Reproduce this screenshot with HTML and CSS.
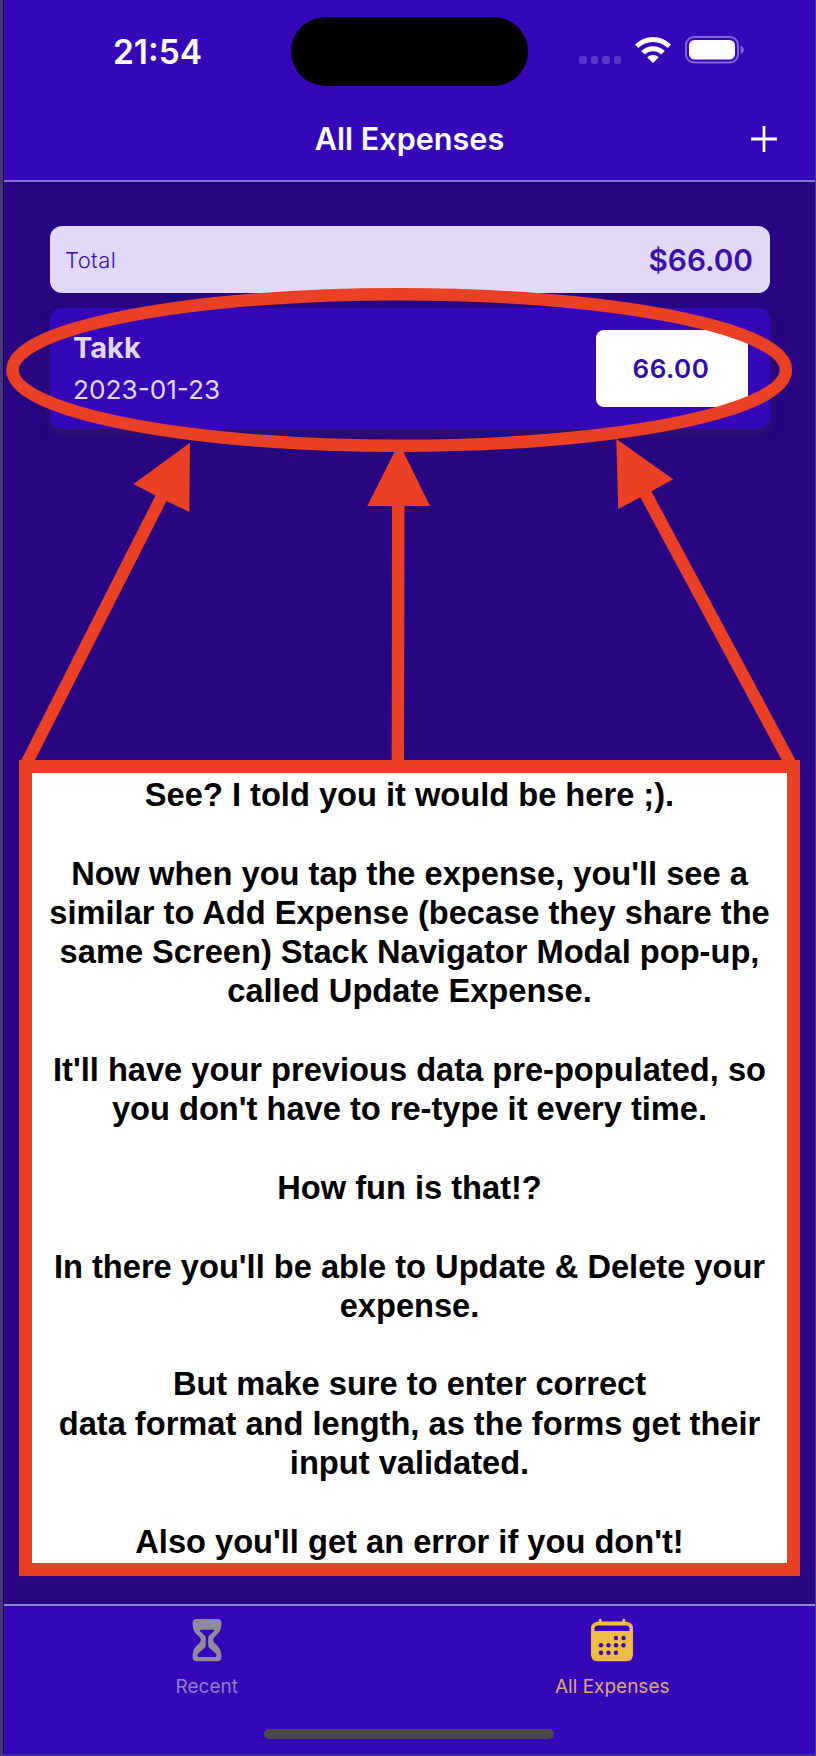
FILE: index.html
```html
<!DOCTYPE html>
<html lang="en">
<head>
<meta charset="utf-8">
<title>All Expenses</title>
<link rel="stylesheet" href="styles.css">
</head>
<body>
<div class="phone">
  <header class="header">
    <div class="status">
      <div class="status-side"><span class="clock">21:54</span></div>
      <div class="island"></div>
      <div class="status-side status-icons">
        <div class="signal"><i></i><i></i><i></i><i></i></div>
        <svg class="wifi" width="36" height="27" viewBox="0 0 36 27">
          <path d="M0 8.5A25.5 25.5 0 0 1 36 8.5L32.7 12A20.8 20.8 0 0 0 3.300 12Z" fill="#fff"/>
          <path d="M6.200 15A16.800 16.800 0 0 1 29.800 15L26.300 18.600A11.900 11.900 0 0 0 9.700 18.600Z" fill="#fff"/>
          <path d="M12.200 21.200A8.400 8.400 0 0 1 23.800 21.200L18 27Z" fill="#fff"/>
        </svg>
        <svg class="battery" width="60" height="28" viewBox="0 0 60 28">
          <rect x="1" y="1" width="52" height="25.500" rx="8" fill="none" stroke="#8463d8" stroke-width="2"/>
          <rect x="4" y="4" width="46" height="19.500" rx="5.500" fill="#fff"/>
          <path d="M55.500 9.500c4.500 1.500 4.500 7 0 8.500z" fill="#8463d8"/>
        </svg>
      </div>
    </div>
    <div class="navbar">
      <h1 class="title">All Expenses</h1>
      <svg class="add" width="28" height="28" viewBox="0 0 28 28"><path d="M14 1v26M1 14h26" stroke="#fff" stroke-width="2.800"/></svg>
    </div>
  </header>
  <main class="content">
    <section class="total"><span class="total-label">Total</span><span class="total-sum">$66.00</span></section>
    <section class="expense">
      <div>
        <div class="name">Takk</div>
        <div class="date">2023-01-23</div>
      </div>
      <div class="amount">66.00</div>
    </section>
    <aside class="note">
      <p>See? I told you it would be here ;).</p>
      <p>Now when you tap the expense, you'll see a<br>similar to Add Expense (becase they share the<br>same Screen) Stack Navigator Modal pop-up,<br>called Update Expense.</p>
      <p>It'll have your previous data pre-populated, so<br>you don't have to re-type it every time.</p>
      <p>How fun is that!?</p>
      <p>In there you'll be able to Update &amp; Delete your<br>expense.</p>
      <p>But make sure to enter correct<br>data format and length, as the forms get their<br>input validated.</p>
      <p>Also you'll get an error if you don't!</p>
    </aside>
  </main>
  <nav class="tabs">
    <div class="tab">
      <svg width="44" height="44" viewBox="0 0 44 44">
        <path fill="#8f8c99" fill-rule="evenodd" d="M12 1H32Q36.800 1 36.400 5.500C36 13 34.500 14.500 29.500 19Q26.800 21.800 29.500 25C34.500 29.500 36 31.500 36.400 38.500Q36.800 43.200 32 43.200H12Q7.200 43.200 7.600 38.500C8 31.500 9.500 29.500 14.500 25Q17.200 21.800 14.500 19C9.500 14.500 8 13 7.600 5.500Q7.200 1 12 1ZM15.500 11.800Q14.200 12 15 13.200L20 17.800Q20.800 18.800 20.800 20V27Q20.800 29 19.500 30L13.500 35.200Q12 36.800 12.500 38.200Q13 39 14 39H30Q31 39 31.500 38.200Q32 36.800 30.500 35.200L24.500 30Q23.200 29 23.200 27V20Q23.200 18.800 24 17.800L29 13.200Q29.800 12 28.500 11.800Z"/>
      </svg>
      <span class="tab-label">Recent</span>
    </div>
    <div class="tab tab-active">
      <svg width="44" height="44" viewBox="0 0 44 44">
        <path fill="#efbd45" fill-rule="evenodd" d="M8.700 3.500V2.200a1.500 1.500 0 0 1 3 0V3.500H32.300V2.200a1.500 1.500 0 0 1 3 0V3.500Q43 4 43 10.500V36.500Q43 43.300 36 43.300H8Q1 43.300 1 36.500V10.500Q1 4 8.700 3.500ZM8 7.500Q4.500 7.500 4.500 10.500V13H39.500V10.500Q39.500 7.500 36 7.500Z"/>
        <g fill="#3a0ca9"><circle cx="26" cy="20" r="2.200"/><circle cx="33.500" cy="20" r="2.200"/><circle cx="11" cy="27.300" r="2.200"/><circle cx="18.500" cy="27.300" r="2.200"/><circle cx="26" cy="27.300" r="2.200"/><circle cx="33.500" cy="27.300" r="2.200"/><circle cx="11" cy="34.700" r="2.200"/><circle cx="18.500" cy="34.700" r="2.200"/><circle cx="26" cy="34.700" r="2.200"/></g>
      </svg>
      <span class="tab-label">All Expenses</span>
    </div>
    <div class="home-bar"></div>
  </nav>
  <svg class="callout" width="816" height="1756" viewBox="0 0 816 1756">
    <ellipse cx="399.200" cy="370" rx="386.700" ry="75.800" fill="none" stroke="#ea4025" stroke-width="12.400"/>
    <g fill="#ea4025">
      <path d="M190 442.700L189.300 512L166.500 501L34.500 761H20.800L155.500 495.500L133.500 484Z"/>
      <path d="M399 443L430 506H404.500L404 761H391.700L392 506H367.300Z"/>
      <path d="M616.300 439L673.200 479.300L651.300 491.300L796 761H782.300L640.300 497.300L618.200 509Z"/>
    </g>
  </svg>
</div>
</body>
</html>
```
FILE: styles.css
```css
* { box-sizing: border-box; }
body { margin: 0; background: #290681; font-family: Inter, "Liberation Sans", sans-serif; }
.phone {
  position: relative;
  display: flex;
  flex-direction: column;
  width: 816px;
  height: 1756px;
  overflow: hidden;
  background: #290681;
  border-left: 3px solid #49337f;
  border-right: 1px solid #4c389a;
  border-bottom: 2px solid #432b94;
  box-shadow: inset 1px 0 #12033d;
}
.header {
  display: flex;
  flex-direction: column;
  height: 182px;
  margin-left: 1px;
  background: #3606b9;
  border-bottom: 2px solid #8174cf;
}
.status { display: flex; height: 104px; padding-top: 17px; }
.status-side { width: 287px; height: 69px; }
.clock {
  display: block;
  padding: 15px 0 0 109px;
  font-size: 33.500px;
  line-height: 40px;
  font-weight: 600;
  color: #fff;
}
.island { width: 237px; height: 69px; border-radius: 35px; background: #000; }
.status-icons { display: flex; align-items: flex-start; padding: 19px 0 0 51px; }
.signal { display: flex; gap: 4px; padding-top: 20px; }
.signal i { width: 7.500px; height: 7.500px; border-radius: 2.500px; background: #5d33c8; }
.wifi { margin-left: 14px; }
.battery { margin-left: 14px; }
.navbar {
  display: grid;
  grid-template-columns: 1fr auto 1fr;
  align-items: center;
  height: 70px;
}
.title { grid-column: 2; margin: 0; font-size: 30.600px; font-weight: 600; line-height: 40px; color: #fff; }
.add { justify-self: end; margin-right: 37px; }
.content { flex: 1; display: flex; flex-direction: column; padding: 44px 15px 0 16px; }
.total {
  display: flex;
  justify-content: space-between;
  align-items: center;
  height: 67px;
  margin: 0 30px 0 31px;
  padding: 0 17px 0 15px;
  border-radius: 12px;
  background: #e2d9f9;
  color: #3a0fb0;
}
.total-label { font-size: 22px; font-weight: 350; letter-spacing: .4px; }
.total-sum { font-size: 29.800px; font-weight: 630; }
.expense {
  display: flex;
  justify-content: space-between;
  align-items: center;
  height: 121px;
  margin: 15px 30px 0 31px;
  padding: 0 22px 0 23px;
  border-radius: 12px;
  background: #3606b9;
  box-shadow: 0 6px 10px -2px rgba(57, 35, 80, .5);
  color: #e2d9f9;
}
.name { padding-top: 2px; font-size: 29px; font-weight: 700; line-height: 40px; }
.date { font-size: 26.200px; line-height: 43px; }
.amount {
  display: flex;
  align-items: center;
  justify-content: center;
  width: 152px;
  height: 77px;
  padding-right: 2px;
  border-radius: 8px;
  background: #fff;
  color: #3209ad;
  font-size: 26px;
  font-weight: 600;
  letter-spacing: .5px;
}
.note {
  height: 816px;
  margin-top: 331px;
  padding-top: 2px;
  border: 13px solid #ea4025;
  background: #fff;
  color: #000;
  font: bold 32.630px/39.300px "Liberation Sans", sans-serif;
  text-align: center;
  white-space: nowrap;
}
.note p { margin: 0 0 39.300px; }
.tabs {
  position: relative;
  display: flex;
  height: 150px;
  margin-left: 1px;
  padding-top: 12px;
  background: #3606b9;
  border-top: 2px solid #8b83d9;
}
.tab {
  flex: 1;
  display: flex;
  flex-direction: column;
  align-items: center;
  gap: 12px;
  color: #9180c5;
}
.tab-active { color: #dcaa76; }
.tab-label { font-size: 19px; line-height: 26px; }
.home-bar {
  position: absolute;
  left: 260px;
  bottom: 15px;
  width: 290px;
  height: 10px;
  border-radius: 5px;
  background: #4b4a4b;
}
.callout { position: absolute; left: -3px; top: 0; }
```
